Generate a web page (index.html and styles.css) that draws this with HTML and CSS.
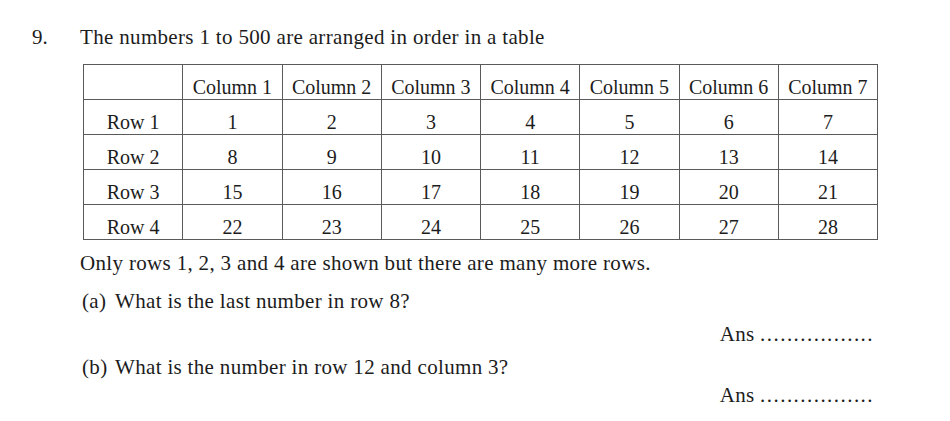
FILE: index.html
```html
<!DOCTYPE html>
<html>
<head>
<meta charset="utf-8">
<link rel="stylesheet" href="styles.css">
</head>
<body>
<div class="question">
  <div class="qnum">9.</div>
  <div class="qbody">
    <p class="line stem">The numbers 1 to 500 are arranged in order in a table</p>
    <table class="grid">
      <tr><th></th><th>Column 1</th><th>Column 2</th><th>Column 3</th><th>Column 4</th><th>Column 5</th><th>Column 6</th><th>Column 7</th></tr>
      <tr><td>Row 1</td><td>1</td><td>2</td><td>3</td><td>4</td><td>5</td><td>6</td><td>7</td></tr>
      <tr><td>Row 2</td><td>8</td><td>9</td><td>10</td><td>11</td><td>12</td><td>13</td><td>14</td></tr>
      <tr><td>Row 3</td><td>15</td><td>16</td><td>17</td><td>18</td><td>19</td><td>20</td><td>21</td></tr>
      <tr><td>Row 4</td><td>22</td><td>23</td><td>24</td><td>25</td><td>26</td><td>27</td><td>28</td></tr>
    </table>
    <p class="line note">Only rows 1, 2, 3 and 4 are shown but there are many more rows.</p>
    <p class="line part part-a"><span class="label">(a)</span>What is the last number in row 8?</p>
    <p class="line ans ans-a">Ans <span class="dots">.................</span></p>
    <p class="line part part-b"><span class="label">(b)</span>What is the number in row 12 and column 3?</p>
    <p class="line ans ans-b">Ans <span class="dots">.................</span></p>
  </div>
</div>
</body>
</html>
```
FILE: styles.css
```css
html, body {
  margin: 0;
  padding: 0;
  background: #ffffff;
}
body {
  font-family: "Liberation Serif", "Times New Roman", serif;
  font-size: 21px;
  color: #1c1c1c;
}
.question {
  display: flex;
  padding-top: 25px;
}
.qnum {
  width: 48px;
  padding-left: 32px;
  line-height: 24px;
  flex: none;
}
.qbody {
  width: 796px;
}
.line {
  margin: 0;
  line-height: 24px;
  height: 24px;
  white-space: nowrap;
  letter-spacing: 0.33px;
}
.grid {
  margin: 15px 0 0 3px;
  border-collapse: collapse;
  table-layout: fixed;
  width: 795px;
  font-size: 20px;
}
.grid th, .grid td {
  border: 1px solid #5a5a5a;
  height: 34px;
  padding: 0;
  font-weight: normal;
  text-align: center;
  vertical-align: bottom;
  line-height: 23px;
}
.note {
  margin-top: 11px;
}
.part {
  padding-left: 2px;
}
.label {
  display: inline-block;
  width: 33px;
}
.part-a {
  margin-top: 14px;
}
.ans {
  text-align: right;
  padding-right: 2px;
}
.dots {
  letter-spacing: 1.45px;
}
.ans-a {
  margin-top: 9px;
}
.part-b {
  margin-top: 9px;
}
.ans-b {
  margin-top: 4px;
}
```
